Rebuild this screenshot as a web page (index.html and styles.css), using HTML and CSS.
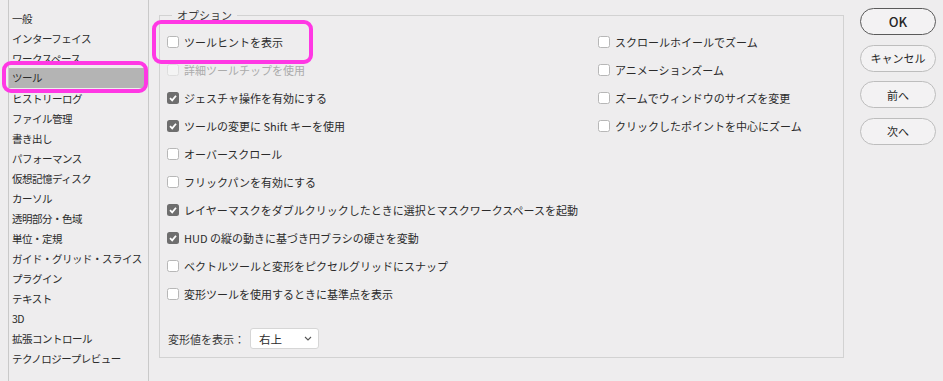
FILE: index.html
```
<!DOCTYPE html>
<html lang="ja">
<head>
  <meta charset="UTF-8" />
  <title>環境設定 - ツール</title>
  <link rel="stylesheet" href="styles.css">
</head>
<body>
  <div class="dialog">
    <ul class="sidebar">
      <li>一般</li>
      <li>インターフェイス</li>
      <li>ワークスペース</li>
      <li class="selected">ツール</li>
      <li>ヒストリーログ</li>
      <li>ファイル管理</li>
      <li>書き出し</li>
      <li>パフォーマンス</li>
      <li>仮想記憶ディスク</li>
      <li>カーソル</li>
      <li>透明部分・色域</li>
      <li>単位・定規</li>
      <li>ガイド・グリッド・スライス</li>
      <li>プラグイン</li>
      <li>テキスト</li>
      <li>3D</li>
      <li>拡張コントロール</li>
      <li>テクノロジープレビュー</li>
    </ul>

    <fieldset class="group">
      <legend>オプション</legend>
      <div class="options">
        <div class="col">
          <div class="opt"><span class="box"></span>ツールヒントを表示</div>
          <div class="opt disabled"><span class="box"></span>詳細ツールチップを使用</div>
          <div class="opt"><span class="box checked"></span>ジェスチャ操作を有効にする</div>
          <div class="opt"><span class="box checked"></span>ツールの変更に Shift キーを使用</div>
          <div class="opt"><span class="box"></span>オーバースクロール</div>
          <div class="opt"><span class="box"></span>フリックパンを有効にする</div>
          <div class="opt"><span class="box checked"></span>レイヤーマスクをダブルクリックしたときに選択とマスクワークスペースを起動</div>
          <div class="opt"><span class="box checked"></span>HUD の縦の動きに基づき円ブラシの硬さを変動</div>
          <div class="opt"><span class="box"></span>ベクトルツールと変形をピクセルグリッドにスナップ</div>
          <div class="opt"><span class="box"></span>変形ツールを使用するときに基準点を表示</div>
        </div>
        <div class="col">
          <div class="opt"><span class="box"></span>スクロールホイールでズーム</div>
          <div class="opt"><span class="box"></span>アニメーションズーム</div>
          <div class="opt"><span class="box"></span>ズームでウィンドウのサイズを変更</div>
          <div class="opt"><span class="box"></span>クリックしたポイントを中心にズーム</div>
        </div>
      </div>
      <div class="select-row">
        <span class="select-label">変形値を表示：</span>
        <div class="select">
          <span>右上</span>
          <svg width="8" height="5" viewBox="0 0 8 5"><path d="M1 1 L4 4 L7 1" fill="none" stroke="#555" stroke-width="1.1"/></svg>
        </div>
      </div>
    </fieldset>

    <div class="buttons">
      <button class="default">OK</button>
      <button>キャンセル</button>
      <button>前へ</button>
      <button>次へ</button>
    </div>
  </div>

  <div class="mark mark-tool"></div>
  <div class="mark mark-hint"></div>
</body>
</html>
```

FILE: styles.css
```
body {
  margin: 0;
  background-color: #eeedee;
  font-family: "Noto Sans CJK JP", "Noto Sans", sans-serif;
  color: #2b2b2b;
  overflow: hidden;
}
.dialog {
  display: flex;
  align-items: flex-start;
  height: 381px;
}
.sidebar {
  list-style: none;
  margin: 0 0 0 8px;
  padding: 9px 0 0 0;
  width: 141px;
  height: 381px;
  box-sizing: border-box;
  border-left: 1px solid #c9c9c9;
  border-right: 1px solid #c9c9c9;
}
.sidebar li {
  height: 20px;
  line-height: 20px;
  padding-left: 3px;
  margin-right: 4px;
  font-size: 10.5px;
  letter-spacing: -0.5px;
  white-space: nowrap;
}
.sidebar li.selected {
  background-color: #b4b4b4;
  margin-top: -1px;
  margin-bottom: 1px;
}
.group {
  margin: 8px 0 0 10px;
  padding: 6px 0 0 7px;
  width: 685px;
  height: 350px;
  box-sizing: border-box;
  border: 1px solid #d2d2d2;
}
.group legend {
  margin-left: 5px;
  padding: 0 5px;
  font-size: 11px;
  line-height: 14px;
  color: #3a3a3a;
}
.options {
  display: flex;
}
.col:first-child {
  width: 431px;
}
.opt {
  display: flex;
  align-items: center;
  height: 28px;
  font-size: 11px;
  white-space: nowrap;
}
.opt.disabled {
  color: #ababab;
}
.box {
  width: 12px;
  height: 12px;
  box-sizing: border-box;
  margin-right: 5px;
  border: 1px solid #b7b7b7;
  border-radius: 2.5px;
  background-color: #fff;
  flex-shrink: 0;
}
.disabled .box {
  border-color: #dedede;
  background-color: #f4f4f4;
}
.box.checked {
  border: none;
  background: #6e6e6e url("data:image/svg+xml,%3Csvg xmlns='http://www.w3.org/2000/svg' width='12' height='12'%3E%3Cpath d='M3 6.2 L5.2 8.4 L9 3.8' fill='none' stroke='white' stroke-width='1.8'/%3E%3C/svg%3E") no-repeat center;
}
.select-row {
  display: flex;
  align-items: center;
  margin-top: 20px;
  font-size: 11px;
}
.select-label {
  width: 82px;
  padding-left: 1px;
  color: #3a3a3a;
}
.select {
  display: flex;
  align-items: center;
  justify-content: space-between;
  width: 69px;
  height: 21px;
  box-sizing: border-box;
  padding: 0 6px 0 8px;
  background-color: #fff;
  border: 1px solid #d6d6d6;
  border-radius: 3px;
  font-size: 11.5px;
}
.buttons {
  display: flex;
  flex-direction: column;
  gap: 9.5px;
  margin: 8px 0 0 16px;
}
.buttons button {
  width: 76px;
  height: 27px;
  border: 1px solid #bdbdbd;
  border-radius: 14px;
  background-color: #f3f2f3;
  font-family: "Noto Sans CJK JP", "Noto Sans", sans-serif;
  font-size: 11px;
  color: #262626;
  padding: 0;
}
.buttons button.default {
  border-color: #5a5a5a;
  font-size: 13px;
  font-weight: 500;
}
.mark {
  position: absolute;
  box-sizing: border-box;
  border: 4.5px solid #ff38e4;
  border-radius: 9px;
}
.mark-tool {
  left: 2px;
  top: 61px;
  width: 146px;
  height: 32px;
}
.mark-hint {
  left: 152px;
  top: 20px;
  width: 161px;
  height: 44px;
}
```
